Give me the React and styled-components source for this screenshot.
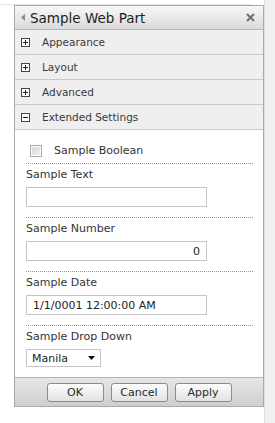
import styled, { createGlobalStyle } from "styled-components";

const GlobalStyle = createGlobalStyle`
  html, body {
    margin: 0;
    padding: 0;
    background: #fff;
  }
  body {
    font-family: "DejaVu Sans", Verdana, sans-serif;
    color: #333;
  }
`;

const Page = styled.div`
  display: flex;
  width: 275px;
  height: 423px;
  overflow: hidden;
  background: #fff;
`;

const Main = styled.div`
  flex: 1;
  display: flex;
  flex-direction: column;
`;

const TopRule = styled.div`
  height: 1px;
  margin: 4px 12px 0 0;
  background: #e4e4e4;
`;

const SideStrip = styled.div`
  width: 10px;
  background: #f0f0f0;
  border-left: 1px solid #e2e2e2;
`;

const Panel = styled.div`
  width: 248px;
  margin-left: 14px;
  border: 1px solid #a9a9a9;
  background: #fff;
`;

const Header = styled.div`
  display: flex;
  align-items: center;
  height: 23px;
  padding: 0 8px 0 6px;
  background: linear-gradient(#f8f8f8, #dadada);
  border-bottom: 1px solid #b9b9b9;

  .title {
    flex: 1;
    margin-left: 5px;
    font-size: 13.5px;
    color: #1e1e1e;
  }
`;

const Section = styled.div`
  display: flex;
  align-items: center;
  height: 24px;
  padding-left: 6px;
  background: #efefef;
  border-bottom: 1px solid #c9c9c9;
  font-size: 10.5px;
  color: #3a3a3a;

  span {
    margin-left: 12px;
  }
`;

const ToggleBox = styled.div`
  width: 7px;
  height: 7px;
  border: 1px solid #444;
  background: #fff;
  display: flex;
  align-items: center;
  justify-content: center;
  svg {
    display: block;
  }
`;

const Content = styled.div`
  padding: 14px 10px 0 11px;
`;

const Field = styled.div`
  display: flex;
  flex-direction: column;
  padding: 4px 0 10px;
  border-top: 1px dotted #8d99a8;
  font-size: 11px;
  color: #333;

  label {
    margin-bottom: 6px;
  }
`;

const CheckRow = styled.div`
  display: flex;
  align-items: center;
  padding-left: 4px;
  padding-bottom: 6px;
  font-size: 11px;
  color: #333;

  span {
    margin-left: 12px;
  }
`;

const Check = styled.div`
  width: 10px;
  height: 10px;
  border: 1px solid #a8a8a8;
  background: linear-gradient(135deg, #d4d4d4, #f2f2f2);
  box-shadow: inset 0 0 0 1px #fff;
`;

const TextBox = styled.div`
  box-sizing: border-box;
  width: 181px;
  height: 20px;
  padding: 0 6px;
  border: 1px solid #c5c5c5;
  display: flex;
  align-items: center;
  justify-content: ${(p) => (p.$right ? "flex-end" : "flex-start")};
  font-size: 11px;
  color: #222;
`;

const Select = styled.div`
  box-sizing: border-box;
  width: 75px;
  height: 18px;
  padding: 0 5px;
  border: 1px solid #c5c5c5;
  display: flex;
  align-items: center;
  justify-content: space-between;
  font-size: 11px;
  color: #222;
`;

const Footer = styled.div`
  display: flex;
  justify-content: center;
  gap: 7px;
  padding: 5px 0 4px;
  background: linear-gradient(#e6e6e6, #cfcfcf);
  border-top: 1px solid #b5b5b5;
`;

const Button = styled.button`
  width: 57px;
  height: 19px;
  padding: 0;
  border: 1px solid #8b8b8b;
  border-radius: 3px;
  background: linear-gradient(#fdfdfd, #e2e2e2);
  font-family: "DejaVu Sans", Verdana, sans-serif;
  font-size: 11px;
  color: #2a2a2a;
`;

function Toggle({ open }) {
  return (
    <ToggleBox>
      <svg width="5" height="5" viewBox="0 0 5 5">
        <rect x="0" y="2" width="5" height="1" fill="#222" />
        {!open && <rect x="2" y="0" width="1" height="5" fill="#222" />}
      </svg>
    </ToggleBox>
  );
}

export default function App() {
  return (
    <Page>
      <GlobalStyle />
      <Main>
        <TopRule />
        <Panel>
          <Header>
            <svg width="4" height="7" viewBox="0 0 4 7">
              <path d="M4 0 L0 3.5 L4 7 Z" fill="#8a8a8a" />
            </svg>
            <span className="title">Sample Web Part</span>
            <svg width="9" height="9" viewBox="0 0 9 9">
              <path d="M1 1 L8 8 M8 1 L1 8" stroke="#6e6e6e" strokeWidth="2" />
            </svg>
          </Header>
          <Section><Toggle /><span>Appearance</span></Section>
          <Section><Toggle /><span>Layout</span></Section>
          <Section><Toggle /><span>Advanced</span></Section>
          <Section><Toggle open /><span>Extended Settings</span></Section>
          <Content>
            <CheckRow><Check /><span>Sample Boolean</span></CheckRow>
            <Field>
              <label>Sample Text</label>
              <TextBox />
            </Field>
            <Field>
              <label>Sample Number</label>
              <TextBox $right>0</TextBox>
            </Field>
            <Field>
              <label>Sample Date</label>
              <TextBox>1/1/0001 12:00:00 AM</TextBox>
            </Field>
            <Field>
              <label>Sample Drop Down</label>
              <Select>
                Manila
                <svg width="7" height="4" viewBox="0 0 7 4">
                  <path d="M0 0 H7 L3.5 4 Z" fill="#111" />
                </svg>
              </Select>
            </Field>
          </Content>
          <Footer>
            <Button>OK</Button>
            <Button>Cancel</Button>
            <Button>Apply</Button>
          </Footer>
        </Panel>
      </Main>
      <SideStrip />
    </Page>
  );
}
